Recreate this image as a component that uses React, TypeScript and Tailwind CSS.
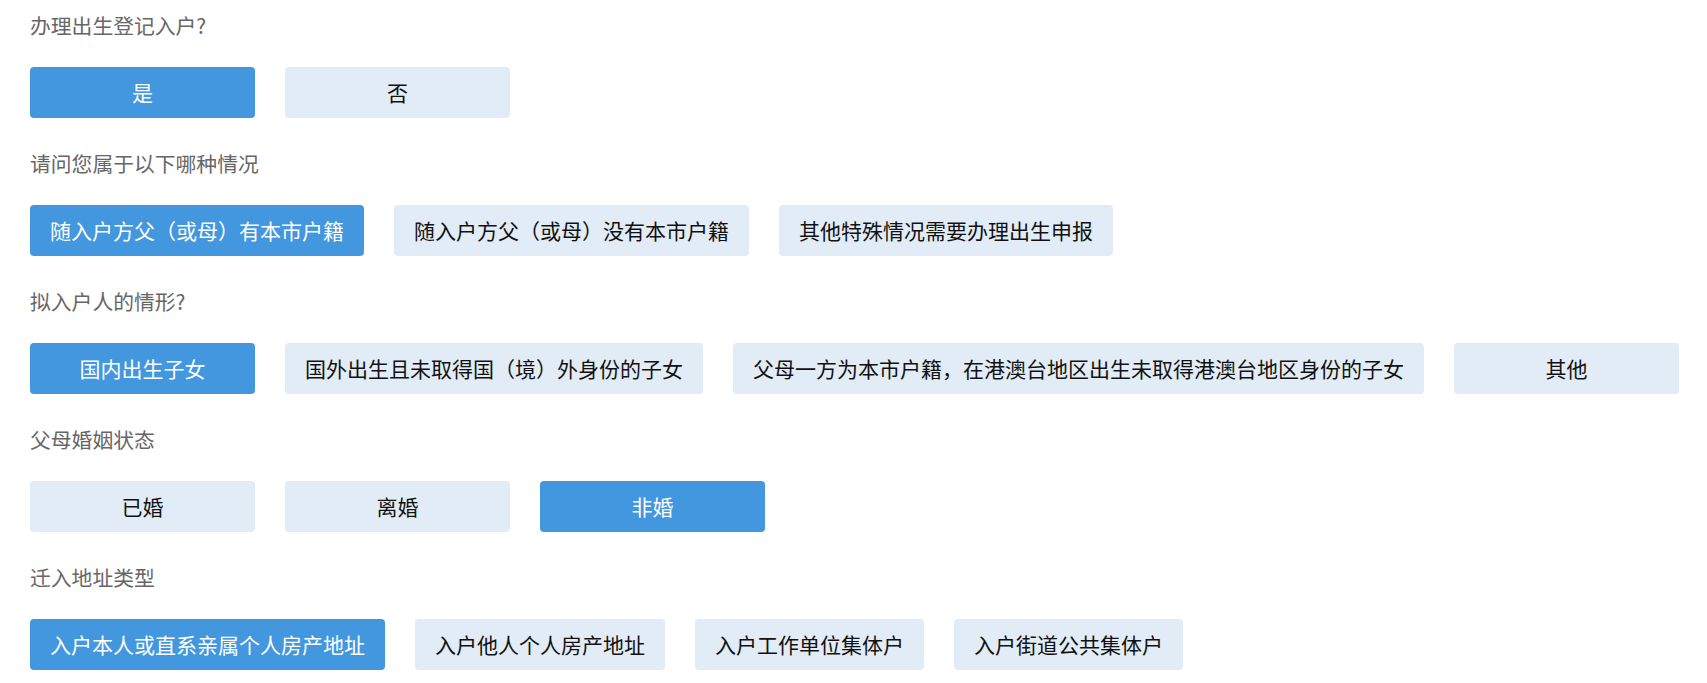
// Birth registration questionnaire: each question shows a title and a row of choice buttons.
import { useState } from "react"

interface Question {
  id: string
  title: string
  options: string[]
  selected: number
}

const questions: Question[] = [
  { id: "register", title: "办理出生登记入户?", options: ["是", "否"], selected: 0 },
  {
    id: "situation",
    title: "请问您属于以下哪种情况",
    options: ["随入户方父（或母）有本市户籍", "随入户方父（或母）没有本市户籍", "其他特殊情况需要办理出生申报"],
    selected: 0,
  },
  {
    id: "person",
    title: "拟入户人的情形?",
    options: [
      "国内出生子女",
      "国外出生且未取得国（境）外身份的子女",
      "父母一方为本市户籍，在港澳台地区出生未取得港澳台地区身份的子女",
      "其他",
    ],
    selected: 0,
  },
  { id: "marriage", title: "父母婚姻状态", options: ["已婚", "离婚", "非婚"], selected: 2 },
  {
    id: "address",
    title: "迁入地址类型",
    options: ["入户本人或直系亲属个人房产地址", "入户他人个人房产地址", "入户工作单位集体户", "入户街道公共集体户"],
    selected: 0,
  },
]

function OptionButton({ label, active, onClick }: { label: string; active: boolean; onClick: () => void }) {
  return (
    <button
      onClick={onClick}
      className={`h-[51px] min-w-[225px] px-[20px] rounded-[4px] text-[21px] leading-none whitespace-nowrap ${
        active ? "bg-[#4297df] text-white" : "bg-[#e2ecf7] text-[#111]"
      }`}
    >
      {label}
    </button>
  )
}

export default function App() {
  const [answers, setAnswers] = useState<Record<string, number>>(
    Object.fromEntries(questions.map((q) => [q.id, q.selected]))
  )

  return (
    <div
      className="min-h-screen bg-white pl-[30px] pt-[10px]"
      style={{ fontFamily: '"Noto Sans CJK SC", "Noto Sans", sans-serif' }}
    >
      {questions.map((q) => (
        <div key={q.id} className="mb-[30px]">
          <div className="h-[30px] leading-[30px] text-[20.8px] text-[#666]">{q.title}</div>
          <div className="mt-[27px] flex gap-[30px]">
            {q.options.map((opt, i) => (
              <OptionButton
                key={opt}
                label={opt}
                active={answers[q.id] === i}
                onClick={() => setAnswers({ ...answers, [q.id]: i })}
              />
            ))}
          </div>
        </div>
      ))}
    </div>
  )
}
